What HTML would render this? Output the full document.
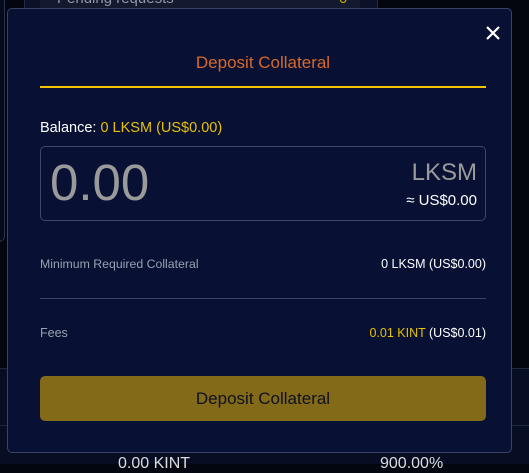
<!DOCTYPE html>
<html><head><style>
body{margin:0;width:529px;height:463px;background:#03060f;position:relative;overflow:hidden;font-family:"Liberation Sans",sans-serif}
.a{position:absolute}
</style></head><body>
<div class="a" style="left:-10px;top:-10px;width:13px;height:250px;border:1px solid #2a3350;border-radius:6px;background:#060b1c"></div>
<div class="a" style="left:24px;top:-5px;width:352px;height:14px;background:#0a1128;border:1px solid #222c48"></div>
<div class="a" style="left:40px;top:-5px;width:320px;height:14px;background:#131a30"></div>
<div class="a" style="left:57px;top:-10px;color:#9097a8;font-size:15px">Pending requests</div>
<div class="a" style="left:339px;top:-10px;color:#c9a700;font-size:15px">0</div>
<div class="a" style="left:0;top:368px;width:529px;height:95px;background:#070d22;border-top:1px solid #1e2740"></div>
<div class="a" style="left:0;top:425px;width:529px;height:1px;background:#1e2740"></div>
<div class="a" style="left:118px;top:455px;color:#ddd;font-size:16px">0.00 KINT</div>
<div class="a" style="left:380px;top:455px;color:#ddd;font-size:16px">900.00%</div>
<div class="a" style="left:7px;top:8px;width:503px;height:443px;background:#081133;border:1px solid #384366;border-radius:5px"></div>
<svg class="a" style="left:485px;top:25px" width="16" height="16" viewBox="0 0 16 16"><path d="M2 2L14 14M14 2L2 14" stroke="#fff" stroke-width="2.2"/></svg>
<div class="a" style="left:40px;top:53px;width:446px;text-align:center;color:#d8692a;font-size:17px">Deposit Collateral</div>
<div class="a" style="left:40px;top:86px;width:446px;height:2px;background:#f5c400"></div>
<div class="a" style="left:40px;top:120px;font-size:14.5px;color:#fff">Balance: <span style="color:#e8c200">0 LKSM (US$0.00)</span></div>
<div class="a" style="left:40px;top:146px;width:444px;height:73px;border:1px solid #3d4769;border-radius:5px"></div>
<div class="a" style="left:50px;top:153px;font-size:51px;color:#9a9a9a">0.00</div>
<div class="a" style="left:300px;top:159px;width:177px;text-align:right;font-size:24px;color:#9a9a9a">LKSM</div>
<div class="a" style="left:300px;top:192px;width:177px;text-align:right;font-size:15px;color:#fff">≈ US$0.00</div>
<div class="a" style="left:40px;top:257px;font-size:12.3px;color:#9aa0b0">Minimum Required Collateral</div>
<div class="a" style="left:280px;top:257px;width:206px;text-align:right;font-size:12.5px;color:#fff">0 LKSM (US$0.00)</div>
<div class="a" style="left:40px;top:298px;width:446px;height:1px;background:#3a4465"></div>
<div class="a" style="left:40px;top:326px;font-size:12.5px;color:#9aa0b0">Fees</div>
<div class="a" style="left:280px;top:326px;width:206px;text-align:right;font-size:12.5px;color:#fff"><span style="color:#e8c200">0.01 KINT</span> (US$0.01)</div>
<div class="a" style="left:40px;top:376px;width:446px;height:45px;background:#836a19;border-radius:5px;text-align:center;line-height:45px;font-size:17px;color:#0f1020">Deposit Collateral</div>
</body></html>
